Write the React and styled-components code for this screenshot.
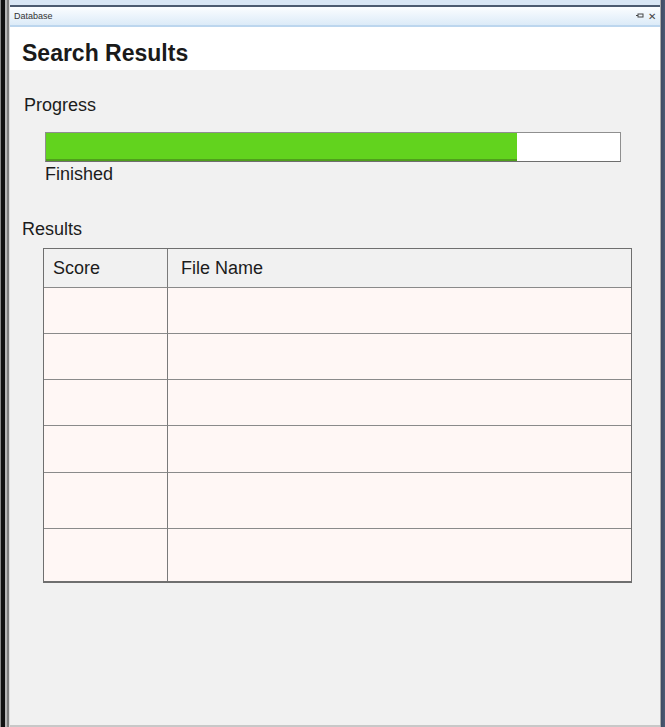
import React from 'react';
import styled, { createGlobalStyle } from 'styled-components';

const GlobalStyle = createGlobalStyle`
    html, body {
        margin: 0;
        padding: 0;
        background: #f1f1f1;
    }
    * {
        box-sizing: border-box;
    }
`;

const rows = [46, 46, 46, 47, 56, 52];
const progress = 0.82;

const Frame = styled.div`
    width: 665px;
    height: 727px;
    display: flex;
    background: #f1f1f1;
    font-family: 'Liberation Sans', Arial, sans-serif;
    color: #1c1c1c;
    overflow: hidden;
`;

const LeftEdge = styled.div`
    width: 10px;
    flex-shrink: 0;
    background: linear-gradient(to right, #8a8a8a 0, #8a8a8a 1px, #111 1px, #111 5px, #b5b5b5 5px, #b5b5b5 7px, #7e7e7e 7px, #7e7e7e 9px, #dcdcdc 9px);
`;

const RightEdge = styled.div`
    width: 5px;
    flex-shrink: 0;
    background: linear-gradient(to right, #a9a9a9 0, #a9a9a9 1px, #3e4b63 1px, #4d5a73 5px);
`;

const Main = styled.div`
    flex: 1;
    display: flex;
    flex-direction: column;
    border-bottom: 2px solid #c8c8c8;
`;

const TopStrip = styled.div`
    height: 7px;
    background: linear-gradient(to bottom, #d8e6f5 0, #d8e6f5 5px, #4b5a70 5px, #4b5a70 7px);
`;

const TitleBar = styled.div`
    height: 20px;
    display: flex;
    align-items: center;
    justify-content: space-between;
    padding: 0 4px 0 4px;
    background: linear-gradient(to bottom, #fbfdff, #dcebf8);
    border-bottom: 2px solid #bcd6ee;
    font-size: 9px;
    color: #333;
`;

const TitleIcons = styled.div`
    display: flex;
    align-items: center;
    gap: 4px;
    font-size: 10px;
    color: #444;
`;

const Header = styled.div`
    height: 43px;
    background: #fff;
    display: flex;
    align-items: flex-end;
    padding: 0 0 3px 12px;
`;

const Title = styled.h1`
    margin: 0;
    font-size: 23px;
    font-weight: bold;
    color: #1a1a1a;
`;

const Body = styled.div`
    flex: 1;
    display: flex;
    flex-direction: column;
    padding: 24px 0 0 12px;
`;

const SectionLabel = styled.div`
    font-size: 18px;
    line-height: 22px;
    padding-left: ${(p) => p.$indent || 0}px;
`;

const ProgressBlock = styled.div`
    margin: 16px 0 0 23px;
    width: 576px;
`;

const Track = styled.div`
    height: 30px;
    background: #fff;
    border: 1px solid #8f8f8f;
    border-bottom-color: #6e6e6e;
    display: flex;
`;

const Fill = styled.div`
    background: #62d31e;
    border-bottom: 2px solid #4f9f1c;
`;

const Status = styled.div`
    font-size: 18px;
    line-height: 22px;
    margin-top: 1px;
`;

const ResultsLabel = styled(SectionLabel)`
    margin-top: 33px;
`;

const Table = styled.div`
    margin: 8px 0 0 21px;
    width: 589px;
    border: 1px solid #6f6f6f;
    border-bottom-width: 2px;
    display: grid;
    grid-template-columns: 123px 1fr;
`;

const HeadCell = styled.div`
    height: 39px;
    background: #f1f1f1;
    display: flex;
    align-items: center;
    padding-left: ${(p) => (p.$first ? 9 : 13)}px;
    font-size: 18px;
    border-bottom: 1px solid #8a8a8a;
    border-left: ${(p) => (p.$first ? 'none' : '1px solid #7a7a7a')};
`;

const Cell = styled.div`
    height: ${(p) => p.$h}px;
    background: #fff7f5;
    border-bottom: ${(p) => (p.$last ? 'none' : '1px solid #8a8a8a')};
    border-left: ${(p) => (p.$first ? 'none' : '1px solid #7a7a7a')};
`;

const App = () => (
    <>
        <GlobalStyle />
        <Frame>
            <LeftEdge />
            <Main>
                <TopStrip />
                <TitleBar>
                    <span>Database</span>
                    <TitleIcons>
                        <svg width='8' height='6' viewBox='0 0 8 6'>
                            <rect x='2' y='1' width='5' height='3' fill='none' stroke='#444' strokeWidth='1' />
                            <line x1='0' y1='2.5' x2='2' y2='2.5' stroke='#444' />
                        </svg>
                        <span>✕</span>
                    </TitleIcons>
                </TitleBar>
                <Header>
                    <Title>Search Results</Title>
                </Header>
                <Body>
                    <SectionLabel $indent={2}>Progress</SectionLabel>
                    <ProgressBlock>
                        <Track>
                            <Fill style={{ width: `${progress * 100}%` }} />
                        </Track>
                        <Status>Finished</Status>
                    </ProgressBlock>
                    <ResultsLabel>Results</ResultsLabel>
                    <Table>
                        <HeadCell $first>Score</HeadCell>
                        <HeadCell>File Name</HeadCell>
                        {rows.map((h, i) => (
                            <React.Fragment key={i}>
                                <Cell $first $h={h} $last={i === rows.length - 1} />
                                <Cell $h={h} $last={i === rows.length - 1} />
                            </React.Fragment>
                        ))}
                    </Table>
                </Body>
            </Main>
            <RightEdge />
        </Frame>
    </>
);

export default App;
